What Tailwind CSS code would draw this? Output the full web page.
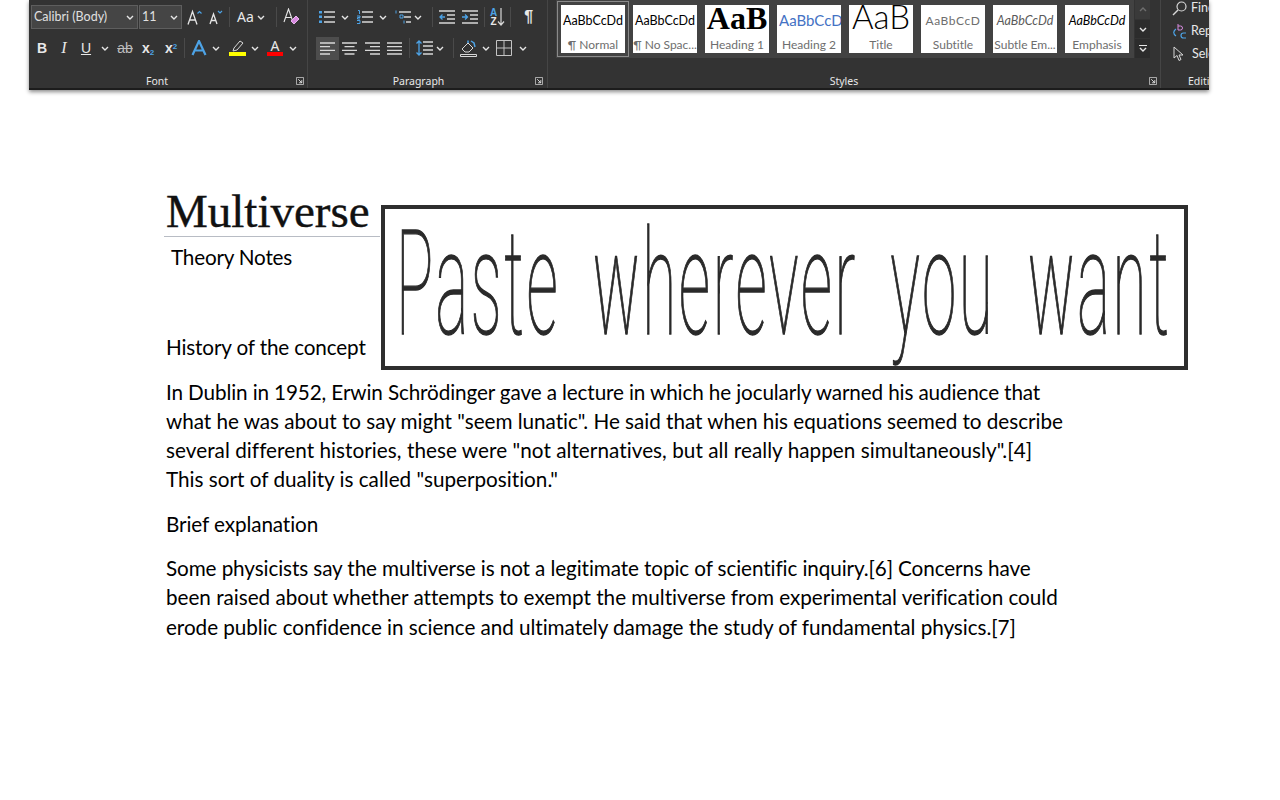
<!DOCTYPE html>
<html lang="en">
<head>
<meta charset="UTF-8" />
<title>Multiverse - Word</title>
<script src="https://cdn.jsdelivr.net/npm/@tailwindcss/browser@4"></script>
</head>
<body class="bg-white h-[800px] w-[1280px] overflow-hidden relative font-['Lato',sans-serif] text-black [font-variant-ligatures:none]">

<!-- shared icons -->
<svg class="hidden">
  <symbol id="chev" viewBox="0 0 8 5"><path d="M1 1l3 3 3-3" fill="none" stroke="#e6e6e6" stroke-width="1.4"/></symbol>
  <symbol id="launch" viewBox="0 0 9 9"><path d="M.5.5h8v8h-8z" fill="none" stroke="#bdbdbd"/><path d="M2.5 2.5l4 4M6.5 3.5v3h-3" fill="none" stroke="#e6e6e6"/></symbol>
</svg>

<!-- Ribbon -->
<div class="ml-[29px] w-[1180px] h-[90px] bg-[#333333] flex overflow-hidden border-b-2 border-[#1c1c1c] shadow-[0_2px_4px_rgba(0,0,0,0.45)] text-[#e8e8e8] font-['Noto_Sans',sans-serif]">

  <!-- Font group -->
  <div class="w-[279px] h-full shrink-0 border-r border-[#454545] pl-[2px] relative">
    <div class="flex items-center h-[24px] mt-[5px]">
      <div class="w-[107px] h-[24px] bg-[#454545] border border-[#5e5e5e] flex items-center justify-between pl-[2px] pr-[3px] text-[12.5px] font-['Lato',sans-serif] text-[#e0e0e0]">
        <span>Calibri (Body)</span><svg class="w-[8px] h-[5px]"><use href="#chev"/></svg>
      </div>
      <div class="w-[43px] h-[24px] ml-[1px] bg-[#454545] border border-[#5e5e5e] flex items-center justify-between pl-[2px] pr-[3px] text-[12.5px] font-['Lato',sans-serif] text-[#e0e0e0]">
        <span>11</span><svg class="w-[8px] h-[5px]"><use href="#chev"/></svg>
      </div>
      <svg class="w-[15px] h-[17px] ml-[5px]" viewBox="0 0 15 16"><path d="M1 15L5.500 2 10 15M3 10.500h5" fill="none" stroke="#e6e6e6" stroke-width="1.300"/><path d="M10.500 4l2-2 2 2" fill="none" stroke="#4da3e6" stroke-width="1.200"/></svg>
      <svg class="w-[14px] h-[16px] ml-[7px]" viewBox="0 0 14 16"><path d="M1 15L4.500 5 8 15M2.500 11.500h4" fill="none" stroke="#e6e6e6" stroke-width="1.300"/><path d="M9 2l2 2 2-2" fill="none" stroke="#4da3e6" stroke-width="1.200"/></svg>
      <div class="w-px h-[20px] bg-[#4a4a4a] ml-[6px]"></div>
      <div class="ml-[7px] text-[14px] leading-none">Aa</div>
      <svg class="w-[8px] h-[5px] ml-[3px]"><use href="#chev"/></svg>
      <div class="w-px h-[20px] bg-[#4a4a4a] ml-[11px]"></div>
      <svg class="w-[17px] h-[18px] ml-[6px]" viewBox="0 0 17 18"><path d="M1 14L5.500 1 10 14M3 9.500h5" fill="none" stroke="#e6e6e6" stroke-width="1.100"/><path d="M8 13l5-5 3 3-5 5z" fill="#d78be0" stroke="#e9b4ef"/></svg>
    </div>
    <div class="flex items-center h-[24px] mt-[7px] text-[14px] leading-none">
      <span class="w-[22px] text-center font-bold font-['Liberation_Sans',sans-serif]">B</span>
      <span class="w-[22px] text-center italic font-['Liberation_Serif',serif] text-[16px]">I</span>
      <span class="w-[22px] text-center underline font-['Liberation_Sans',sans-serif]">U</span>
      <svg class="w-[8px] h-[5px] ml-[4px]"><use href="#chev"/></svg>
      <span class="w-[24px] ml-[4px] text-center line-through font-['Liberation_Sans',sans-serif] text-[#bdbdbd]">ab</span>
      <span class="w-[22px] text-center font-bold font-['Liberation_Sans',sans-serif]">x<sub class="text-[8px] text-[#4da3e6]">2</sub></span>
      <span class="w-[24px] text-center font-bold font-['Liberation_Sans',sans-serif]">x<sup class="text-[8px] text-[#4da3e6]">2</sup></span>
      <div class="w-px h-[20px] bg-[#4a4a4a] ml-[1px]"></div>
      <svg class="w-[16px] h-[16px] ml-[6px]" viewBox="0 0 16 16"><path d="M1.500 15L8 1l6.500 14M4.500 10.500h7" fill="none" stroke="#4da3e6" stroke-width="2.200"/></svg>
      <svg class="w-[8px] h-[5px] ml-[5px]"><use href="#chev"/></svg>
      <div class="ml-[9px] w-[17px] flex flex-col items-center">
        <svg class="w-[14px] h-[12px]" viewBox="0 0 14 12"><path d="M2 11l1-3 6-7 3 2-6 7z" fill="none" stroke="#d8d8d8"/></svg>
        <div class="w-[17px] h-[4px] bg-[#ffff00]"></div>
      </div>
      <svg class="w-[8px] h-[5px] ml-[5px]"><use href="#chev"/></svg>
      <div class="ml-[8px] w-[16px] flex flex-col items-center">
        <span class="text-[14px] leading-[12px] h-[12px]">A</span>
        <div class="w-[16px] h-[4px] bg-[#ff0000]"></div>
      </div>
      <svg class="w-[8px] h-[5px] ml-[6px]"><use href="#chev"/></svg>
    </div>
    <div class="absolute left-0 right-[22px] top-[74px] text-center text-[10.500px] leading-[14px]">Font</div>
    <svg class="absolute right-[3px] top-[77px] w-[8px] h-[8px]"><use href="#launch"/></svg>
  </div>

  <!-- Paragraph group -->
  <div class="w-[240px] h-full shrink-0 border-r border-[#454545] relative">
    <div class="flex items-center h-[24px] mt-[5px]">
      <svg class="w-[16px] h-[14px] ml-[11px]" viewBox="0 0 16 14"><path d="M0 1h3v2.500H0zM0 5.500h3V8H0zM0 10.500h3V13H0z" fill="#4da3e6"/><path d="M5 2h11M5 7h11M5 12h11" stroke="#d8d8d8" stroke-width="1.300"/></svg>
      <svg class="w-[8px] h-[5px] ml-[6px]"><use href="#chev"/></svg>
      <svg class="w-[16px] h-[14px] ml-[8px]" viewBox="0 0 16 14"><path d="M1 0.500h1.500v3.500M0 6h3v1.500H0.500V9H3M0 10.500h3v3H0" fill="none" stroke="#4da3e6"/><path d="M5 2h11M5 7h11M5 12h11" stroke="#d8d8d8" stroke-width="1.300"/></svg>
      <svg class="w-[8px] h-[5px] ml-[6px]"><use href="#chev"/></svg>
      <svg class="w-[16px] h-[14px] ml-[8px]" viewBox="0 0 16 14"><path d="M1 0.500v3M5 5h3v3H5zM9 10.500v3" fill="none" stroke="#4da3e6"/><path d="M4 2h12M9 7h7M11 12h5" stroke="#d8d8d8" stroke-width="1.300"/></svg>
      <svg class="w-[8px] h-[5px] ml-[3px]"><use href="#chev"/></svg>
      <div class="w-px h-[20px] bg-[#4a4a4a] ml-[10px]"></div>
      <svg class="w-[16px] h-[14px] ml-[6px]" viewBox="0 0 16 14"><path d="M0 1h16M8 5h8M8 9h8M0 13h16" stroke="#d8d8d8" stroke-width="1.300"/><path d="M6 7H1M3.500 4.500L1 7l2.500 2.500" fill="none" stroke="#4da3e6" stroke-width="1.300"/></svg>
      <svg class="w-[16px] h-[14px] ml-[7px]" viewBox="0 0 16 14"><path d="M0 1h16M8 5h8M8 9h8M0 13h16" stroke="#d8d8d8" stroke-width="1.300"/><path d="M0 7h5M3 4.500L5.500 7 3 9.500" fill="none" stroke="#4da3e6" stroke-width="1.300"/></svg>
      <div class="w-px h-[20px] bg-[#4a4a4a] ml-[6px]"></div>
      <div class="ml-[5px] flex flex-col items-center text-[10px] leading-[9px] font-bold font-['Liberation_Sans',sans-serif]"><span class="text-[#4da3e6]">A</span><span>Z</span></div>
      <svg class="w-[8px] h-[18px]" viewBox="0 0 8 18"><path d="M4 0v17M1 13.500L4 17l3-3.500" fill="none" stroke="#d8d8d8" stroke-width="1.200"/></svg>
      <div class="w-px h-[20px] bg-[#4a4a4a] ml-[5px]"></div>
      <span class="ml-[13px] text-[16px] font-bold leading-none font-['Liberation_Sans',sans-serif]">¶</span>
    </div>
    <div class="flex items-center h-[24px] mt-[7px]">
      <div class="w-[23px] h-[23px] ml-[8px] bg-[#4d4d4d] flex items-center justify-center">
        <svg class="w-[15px] h-[13px]" viewBox="0 0 15 13"><path d="M0 1h15M0 4.700h10M0 8.300h15M0 12h10" stroke="#d8d8d8" stroke-width="1.300"/></svg>
      </div>
      <svg class="w-[15px] h-[13px] ml-[3px]" viewBox="0 0 15 13"><path d="M0 1h15M2.500 4.700h10M0 8.300h15M2.500 12h10" stroke="#d8d8d8" stroke-width="1.300"/></svg>
      <svg class="w-[15px] h-[13px] ml-[8px]" viewBox="0 0 15 13"><path d="M0 1h15M5 4.700h10M0 8.300h15M5 12h10" stroke="#d8d8d8" stroke-width="1.300"/></svg>
      <svg class="w-[15px] h-[13px] ml-[7px]" viewBox="0 0 15 13"><path d="M0 1h15M0 4.700h15M0 8.300h15M0 12h15" stroke="#d8d8d8" stroke-width="1.300"/></svg>
      <div class="w-px h-[20px] bg-[#4a4a4a] ml-[7px]"></div>
      <svg class="w-[17px] h-[16px] ml-[6px]" viewBox="0 0 17 16"><path d="M3 1v14M.5 3.500L3 1l2.500 2.500M.5 12.500L3 15l2.500-2.500" fill="none" stroke="#4da3e6" stroke-width="1.300"/><path d="M7 2h10M7 6h10M7 10h10M7 14h10" stroke="#d8d8d8" stroke-width="1.300"/></svg>
      <svg class="w-[8px] h-[5px] ml-[3px]"><use href="#chev"/></svg>
      <div class="w-px h-[20px] bg-[#4a4a4a] ml-[9px]"></div>
      <svg class="w-[17px] h-[18px] ml-[6px]" viewBox="0 0 17 18"><path d="M2 10l6-6 5 5-4 4H5z" fill="none" stroke="#d8d8d8"/><path d="M8 4V1.500M11 2l3 2 1 4" fill="none" stroke="#4da3e6" stroke-width="1.500"/><path d="M0.500 15.500h16v2h-16z" fill="none" stroke="#d8d8d8"/></svg>
      <svg class="w-[8px] h-[5px] ml-[5px]"><use href="#chev"/></svg>
      <svg class="w-[16px] h-[16px] ml-[6px]" viewBox="0 0 16 16"><path d="M.5.500h15v15H.5zM8 .5v15M.5 8h15" fill="none" stroke="#c4c4c4"/></svg>
      <svg class="w-[8px] h-[5px] ml-[7px]"><use href="#chev"/></svg>
    </div>
    <div class="absolute left-0 right-[18px] top-[74px] text-center text-[10.500px] leading-[14px]">Paragraph</div>
    <svg class="absolute right-[4px] top-[77px] w-[8px] h-[8px]"><use href="#launch"/></svg>
  </div>

  <!-- Styles group -->
  <div class="w-[613px] h-full shrink-0 border-r border-[#454545] relative">
    <div class="flex h-[58px] w-[595px] ml-[8px]">
      <div class="w-[578px] h-[58px] bg-[#424242] flex items-start pl-[1px] pt-[1px]">
        <div class="w-[72px] h-[56px] border border-[#8a8a8a] flex items-center justify-center shrink-0">
          <div class="w-[64px] h-[48px] bg-white flex flex-col items-center overflow-hidden">
            <span class="h-[32px] leading-[32px] text-[12.500px] text-black font-['Lato',sans-serif] whitespace-nowrap">AaBbCcDd</span>
            <span class="text-[12px] leading-[15px] text-[#6e6e6e] font-['Lato',sans-serif] whitespace-nowrap">¶ Normal</span>
          </div>
        </div>
        <div class="w-[64px] h-[48px] mt-[4px] ml-[4px] bg-white flex flex-col items-center overflow-hidden shrink-0">
          <span class="h-[32px] leading-[32px] text-[12.500px] text-black font-['Lato',sans-serif] whitespace-nowrap">AaBbCcDd</span>
          <span class="text-[12px] leading-[15px] text-[#6e6e6e] font-['Lato',sans-serif] whitespace-nowrap">¶ No Spac...</span>
        </div>
        <div class="w-[64px] h-[48px] mt-[4px] ml-[8px] bg-white flex flex-col items-center overflow-hidden shrink-0">
          <span class="h-[32px] leading-[27px] text-[32px] font-bold text-black font-['Liberation_Serif',serif] whitespace-nowrap">AaB</span>
          <span class="text-[12px] leading-[15px] text-[#6e6e6e] font-['Lato',sans-serif] whitespace-nowrap">Heading 1</span>
        </div>
        <div class="w-[64px] h-[48px] mt-[4px] ml-[8px] bg-white flex flex-col overflow-hidden shrink-0">
          <span class="h-[32px] leading-[30px] pl-[2px] text-[15px] text-[#4472c4] font-['Lato',sans-serif] whitespace-nowrap">AaBbCcD</span>
          <span class="text-center text-[12px] leading-[15px] text-[#6e6e6e] font-['Lato',sans-serif] whitespace-nowrap">Heading 2</span>
        </div>
        <div class="w-[64px] h-[48px] mt-[4px] ml-[8px] bg-white flex flex-col items-center overflow-hidden shrink-0">
          <span class="h-[32px] leading-[22px] text-[33px] text-black font-['Lato',sans-serif] font-light whitespace-nowrap">AaB</span>
          <span class="text-[12px] leading-[15px] text-[#6e6e6e] font-['Lato',sans-serif] whitespace-nowrap">Title</span>
        </div>
        <div class="w-[64px] h-[48px] mt-[4px] ml-[8px] bg-white flex flex-col items-center overflow-hidden shrink-0">
          <span class="h-[32px] leading-[32px] text-[12px] tracking-[0.6px] text-[#6e6e6e] font-['Lato',sans-serif] whitespace-nowrap">AaBbCcD</span>
          <span class="text-[12px] leading-[15px] text-[#6e6e6e] font-['Lato',sans-serif] whitespace-nowrap">Subtitle</span>
        </div>
        <div class="w-[64px] h-[48px] mt-[4px] ml-[8px] bg-white flex flex-col items-center overflow-hidden shrink-0">
          <span class="h-[32px] leading-[32px] text-[12.500px] italic text-[#5a5a5a] font-['Lato',sans-serif] whitespace-nowrap">AaBbCcDd</span>
          <span class="text-[12px] leading-[15px] text-[#6e6e6e] font-['Lato',sans-serif] whitespace-nowrap">Subtle Em...</span>
        </div>
        <div class="w-[64px] h-[48px] mt-[4px] ml-[8px] bg-white flex flex-col items-center overflow-hidden shrink-0">
          <span class="h-[32px] leading-[32px] text-[12.500px] italic text-black font-['Lato',sans-serif] whitespace-nowrap">AaBbCcDd</span>
          <span class="text-[12px] leading-[15px] text-[#6e6e6e] font-['Lato',sans-serif] whitespace-nowrap">Emphasis</span>
        </div>
      </div>
      <div class="w-[15px] ml-[1px] flex flex-col gap-[1px]">
        <div class="h-[19px] bg-[#3a3a3a] flex items-center justify-center"><svg class="w-[8px] h-[5px] rotate-180 opacity-30"><use href="#chev"/></svg></div>
        <div class="h-[18px] bg-[#2c2c2c] flex items-center justify-center"><svg class="w-[8px] h-[5px]"><use href="#chev"/></svg></div>
        <div class="h-[19px] bg-[#2c2c2c] flex flex-col items-center justify-center gap-[1px]"><div class="w-[8px] h-px bg-[#e6e6e6]"></div><svg class="w-[8px] h-[5px]"><use href="#chev"/></svg></div>
      </div>
    </div>
    <div class="absolute left-0 right-[20px] top-[74px] text-center text-[10.500px] leading-[14px]">Styles</div>
    <svg class="absolute right-[3px] top-[77px] w-[8px] h-[8px]"><use href="#launch"/></svg>
  </div>

  <!-- Editing group (cut off by the window edge) -->
  <div class="w-[48px] h-full shrink-0 relative overflow-hidden text-[12.500px] font-['Lato',sans-serif]">
    <div class="flex items-center h-[16px] ml-[11px] gap-[4px]">
      <svg class="w-[15px] h-[15px] shrink-0" viewBox="0 0 15 15"><circle cx="9.500" cy="5.500" r="4.500" fill="none" stroke="#d8d8d8" stroke-width="1.200"/><path d="M6 9l-5 5" stroke="#d8d8d8" stroke-width="1.400"/></svg>
      <span>Find</span>
    </div>
    <div class="flex items-center h-[16px] mt-[7px] ml-[11px] gap-[4px]">
      <svg class="w-[15px] h-[16px] shrink-0" viewBox="0 0 15 16"><path d="M4 6C1 8 1 11 4 13M1.500 9.500L3 7" fill="none" stroke="#4da3e6" stroke-width="1.200"/><path d="M6 1v6h2.500a2 2 0 000-4H6" fill="none" stroke="#d78be0"/><path d="M14 10h-2.500a2.500 2.500 0 000 5H14" fill="none" stroke="#4da3e6" stroke-width="1.200"/></svg>
      <span>Replace</span>
    </div>
    <div class="flex items-center h-[16px] mt-[7px] ml-[12px] gap-[7px]">
      <svg class="w-[12px] h-[16px] shrink-0" viewBox="0 0 12 16"><path d="M1 1v11l3-2.500 2 5 2-1-2-4.500h4z" fill="none" stroke="#d8d8d8"/></svg>
      <span>Select</span>
    </div>
    <div class="absolute left-[27px] top-[74px] text-[10.500px] leading-[14px] font-['Noto_Sans',sans-serif] whitespace-nowrap">Editing</div>
  </div>
</div>

<!-- Document -->
<div class="pl-[166px] pt-[97px] text-[20.700px] leading-[29.300px]">
  <div class="w-[216px] -ml-[2px] pl-[2px] h-[50px] border-b border-[#b8bcc4] font-['Liberation_Serif',serif] text-[47px] leading-[48px] text-[#111] [-webkit-text-stroke:0.4px_#111] whitespace-nowrap">Multiverse</div>
  <p class="mt-[6px] ml-[5px] tracking-[-0.2px]">Theory Notes</p>
  <p class="mt-[61px] tracking-[-0.15px]">History of the concept</p>
  <div class="mt-[15px] whitespace-nowrap">
    <p class="tracking-[-0.12px]">In Dublin in 1952, Erwin Schrödinger gave a lecture in which he jocularly warned his audience that</p>
    <p class="tracking-[-0.03px]">what he was about to say might "seem lunatic". He said that when his equations seemed to describe</p>
    <p class="tracking-[0.05px]">several different histories, these were "not alternatives, but all really happen simultaneously".[4]</p>
    <p>This sort of duality is called "superposition."</p>
  </div>
  <p class="mt-[15px] tracking-[-0.1px]">Brief explanation</p>
  <div class="mt-[15px] whitespace-nowrap">
    <p class="tracking-[-0.1px]">Some physicists say the multiverse is not a legitimate topic of scientific inquiry.[6] Concerns have</p>
    <p class="tracking-[-0.02px]">been raised about whether attempts to exempt the multiverse from experimental verification could</p>
    <p class="tracking-[-0.05px]">erode public confidence in science and ultimately damage the study of fundamental physics.[7]</p>
  </div>
</div>

<!-- Pasted picture over the page -->
<div class="absolute left-[381px] top-[205px] w-[807px] h-[165px] bg-white border-[4px] border-[#2e2e2e] overflow-hidden">
  <div class="absolute left-[11px] top-[4px] origin-top-left scale-y-[2.370] text-[62px] leading-[60px] tracking-[2.600px] [word-spacing:15px] [-webkit-text-stroke:0.6px_#2a2a2a] font-['Roboto',sans-serif] font-thin text-[#2a2a2a] whitespace-nowrap">Paste wherever you want</div>
</div>

</body>
</html>
